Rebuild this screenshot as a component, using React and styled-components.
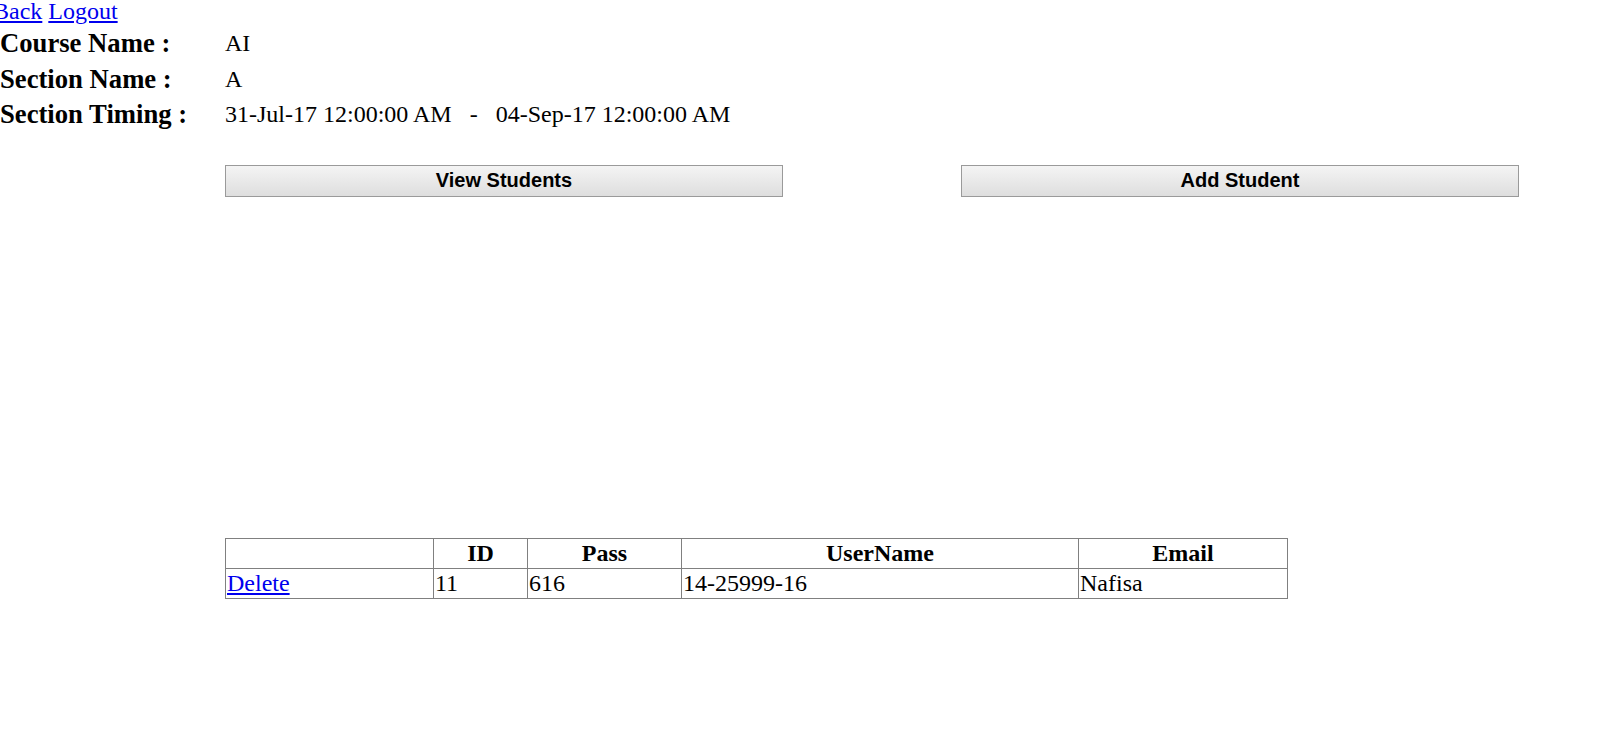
import React from 'react';
import styled, { createGlobalStyle } from 'styled-components';

const GlobalStyle = createGlobalStyle`
  body {
    margin: 0;
    background: #fff;
    font-family: "Liberation Serif", "Times New Roman", serif;
    color: #000;
    overflow-x: hidden;
  }
`;

const Page = styled.div`
  width: 100%;
  display: flex;
  flex-direction: column;
`;

const TopLinks = styled.div`
  display: flex;
  gap: 6px;
  height: 26px;
  margin-left: -7px;
  line-height: 22px;
  font-size: 24px;
`;

const NavLink = styled.a`
  color: #0000ee;
  text-decoration: underline;
  cursor: pointer;
`;

const Info = styled.div`
  display: grid;
  grid-template-columns: 225px auto;
  grid-auto-rows: 35.5px;
  align-items: center;
`;

const Label = styled.div`
  font-size: 26.67px;
  font-weight: bold;
`;

const Value = styled.div`
  font-size: 24px;
  white-space: pre;
`;

const Actions = styled.div`
  display: grid;
  grid-template-columns: 558px 558px;
  column-gap: 178px;
  margin: 32px 0 0 225px;
`;

const Button = styled.button`
  height: 32px;
  padding: 0;
  border: 1px solid #9a9a9a;
  border-radius: 0;
  background: linear-gradient(#f4f4f4, #dedede);
  font-family: "Liberation Sans", Arial, sans-serif;
  font-size: 20px;
  font-weight: bold;
  color: #000;
  cursor: pointer;
`;

const Table = styled.table`
  margin: 341px 0 0 225px;
  width: 1063px;
  table-layout: fixed;
  border-collapse: collapse;
  border: 1px solid #808080;
  font-size: 24px;
`;

const Th = styled.th`
  width: ${(p) => (p.w ? `${p.w}px` : 'auto')};
  height: 29px;
  padding: 0 1px;
  border: 1px solid #808080;
  font-weight: bold;
  text-align: center;
  line-height: 29px;
`;

const Td = styled.td`
  height: 29px;
  padding: 0 1px;
  border: 1px solid #808080;
  line-height: 29px;
  text-align: left;
`;

const columns = [
  { key: 'action', title: '', w: 205 },
  { key: 'id', title: 'ID', w: 91 },
  { key: 'pass', title: 'Pass', w: 151 },
  { key: 'user', title: 'UserName', w: 394 },
  { key: 'email', title: 'Email' },
];

const students = [{ id: '11', pass: '616', user: '14-25999-16', email: 'Nafisa' }];

function App() {
  return (
    <Page>
      <GlobalStyle />
      <TopLinks>
        <NavLink>Back</NavLink>
        <NavLink>Logout</NavLink>
      </TopLinks>
      <Info>
        <Label>Course Name :</Label>
        <Value>AI</Value>
        <Label>Section Name :</Label>
        <Value>A</Value>
        <Label>Section Timing :</Label>
        <Value>{'31-Jul-17 12:00:00 AM   -   04-Sep-17 12:00:00 AM'}</Value>
      </Info>
      <Actions>
        <Button>View Students</Button>
        <Button>Add Student</Button>
      </Actions>
      <Table>
        <thead>
          <tr>
            {columns.map((c) => (
              <Th key={c.key} w={c.w}>{c.title}</Th>
            ))}
          </tr>
        </thead>
        <tbody>
          {students.map((s) => (
            <tr key={s.id}>
              <Td><NavLink>Delete</NavLink></Td>
              <Td>{s.id}</Td>
              <Td>{s.pass}</Td>
              <Td>{s.user}</Td>
              <Td>{s.email}</Td>
            </tr>
          ))}
        </tbody>
      </Table>
    </Page>
  );
}

export default App;
